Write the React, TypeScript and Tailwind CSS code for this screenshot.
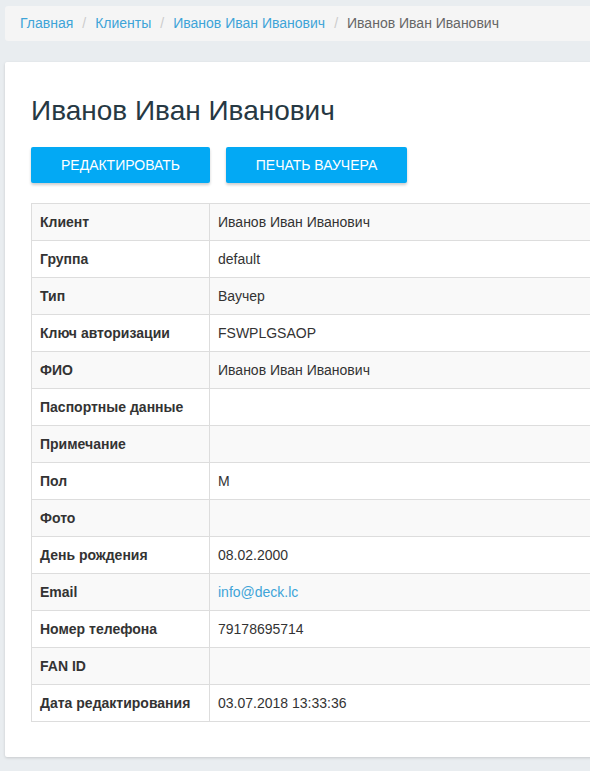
const ROWS: [string, string, boolean?][] = [
  ['Клиент', 'Иванов Иван Иванович'],
  ['Группа', 'default'],
  ['Тип', 'Ваучер'],
  ['Ключ авторизации', 'FSWPLGSAOP'],
  ['ФИО', 'Иванов Иван Иванович'],
  ['Паспортные данные', ''],
  ['Примечание', ''],
  ['Пол', 'М'],
  ['Фото', ''],
  ['День рождения', '08.02.2000'],
  ['Email', 'info@deck.lc', true],
  ['Номер телефона', '79178695714'],
  ['FAN ID', ''],
  ['Дата редактирования', '03.07.2018 13:33:36'],
]

export default function App() {
  return (
    <div className="w-[590px] h-[771px] overflow-hidden bg-[#e9edf0] font-['Liberation_Sans',Arial,sans-serif] text-[#333] text-[14px]">
      <div className="w-[700px] pl-[5px] pt-[6px]">
        {/* Breadcrumb */}
        <nav className="h-[35px] bg-[#f5f5f5] rounded-[3px] flex items-center px-[15px] text-[14px]">
          <a className="text-[#3ea4d8]">Главная</a>
          <span className="pl-[9px] pr-[9px] text-[#ccc]">/</span>
          <a className="text-[#3ea4d8]">Клиенты</a>
          <span className="pl-[9px] pr-[9px] text-[#ccc]">/</span>
          <a className="text-[#3ea4d8]">Иванов Иван Иванович</a>
          <span className="pl-[9px] pr-[9px] text-[#ccc]">/</span>
          <span className="text-[#666]">Иванов Иван Иванович</span>
        </nav>

        {/* Card */}
        <div className="mt-[21px] bg-white shadow-[0_1px_3px_rgba(0,0,0,0.15)] rounded-[2px] pt-[32px] pl-[26px] pb-[35px]">
          <h1 className="text-[28px] leading-[34px] text-[#263843] font-normal">Иванов Иван Иванович</h1>
          <div className="flex gap-[16px] mt-[19px]">
            <button className="w-[179px] h-[36px] bg-[#03a9f4] text-white uppercase text-[14px] rounded-[2px] shadow-[0_2px_3px_rgba(0,0,0,0.2)]">
              Редактировать
            </button>
            <button className="w-[181px] h-[36px] bg-[#03a9f4] text-white uppercase text-[14px] rounded-[2px] shadow-[0_2px_3px_rgba(0,0,0,0.2)]">
              Печать ваучера
            </button>
          </div>

          <table className="mt-[20px] w-[640px] border-collapse border border-[#ddd]">
            <tbody>
              {ROWS.map(([label, value, link], i) => (
                <tr key={label} className={i % 2 === 0 ? 'bg-[#f9f9f9]' : 'bg-white'}>
                  <td className="w-[178px] h-[37px] border border-[#ddd] px-[8px] font-bold text-[#333]">{label}</td>
                  <td className="h-[37px] border border-[#ddd] px-[8px]">
                    {link ? <a className="text-[#3ea4d8]">{value}</a> : value}
                  </td>
                </tr>
              ))}
            </tbody>
          </table>
        </div>
      </div>
    </div>
  )
}
